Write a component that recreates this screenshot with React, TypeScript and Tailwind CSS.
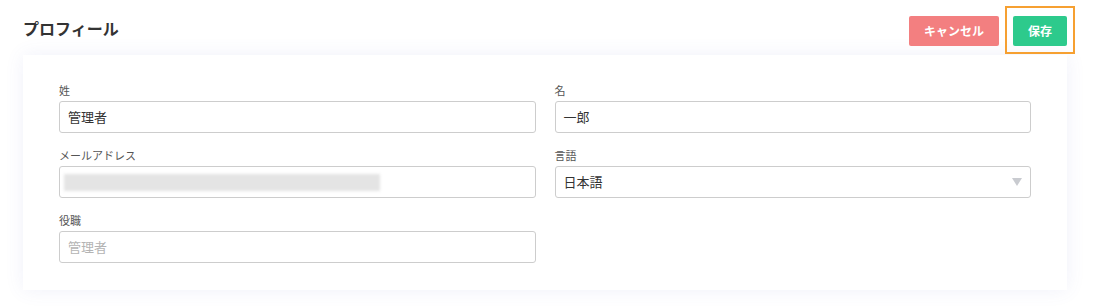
import React from "react";

const font = { fontFamily: '"Noto Sans CJK JP", "Noto Sans", sans-serif' };

function Field({ label, children }: { label: string; children: React.ReactNode }) {
  return (
    <div className="flex flex-col">
      <label className="text-[11px] leading-[16px] text-[#555] mb-[3px]">{label}</label>
      {children}
    </div>
  );
}

function TextBox({ value, placeholder }: { value?: string; placeholder?: string }) {
  return (
    <div className="h-8 border border-[#cdcdcd] rounded-[3px] bg-white flex items-center px-[8px] text-[13px]">
      {value ? (
        <span className="text-[#333]">{value}</span>
      ) : (
        <span className="text-[#b4b4b4]">{placeholder}</span>
      )}
    </div>
  );
}

export default function App() {
  return (
    <div style={font} className="w-[1102px] h-[306px] bg-white pl-[23px] pr-[35px] pt-4">
      <div className="flex items-center justify-between h-[30px]">
        <h2 className="text-[16px] font-bold text-[#333] mb-[7px]">プロフィール</h2>
        <div className="flex gap-[14px]">
          <button className="h-[30px] px-[15px] rounded-[2px] bg-[#f37f80] text-white text-[12px] font-bold">
            キャンセル
          </button>
          <div className="relative">
            <div className="absolute -left-[8px] -right-[8px] -top-[10px] -bottom-[8px] border-2 border-[#f6a031]"></div>
            <button className="relative h-[30px] px-[15px] rounded-[2px] bg-[#2dca8c] text-white text-[12px] font-bold">
              保存
            </button>
          </div>
        </div>
      </div>

      <div className="mt-[9px] bg-white shadow-[0_0_18px_rgba(90,100,200,0.09)] px-9 pt-[27px] pb-[27px]">
        <div className="grid grid-cols-2 gap-x-[19px] gap-y-[14px]">
          <Field label="姓">
            <TextBox value="管理者" />
          </Field>
          <Field label="名">
            <TextBox value="一郎" />
          </Field>
          <Field label="メールアドレス">
            <div className="h-8 border border-[#cdcdcd] rounded-[3px] bg-white flex items-center pl-[4px]">
              <div className="w-[316px] h-[17px] bg-[#e4e4e4] blur-[1.5px]"></div>
            </div>
          </Field>
          <Field label="言語">
            <div className="h-8 border border-[#cdcdcd] rounded-[3px] bg-white flex items-center justify-between pl-[8px] pr-[8px] text-[13px] text-[#333]">
              <span>日本語</span>
              <svg width="10" height="8" viewBox="0 0 10 8">
                <path d="M0 0 H10 L5 8 Z" fill="#c9cbd0" />
              </svg>
            </div>
          </Field>
          <Field label="役職">
            <TextBox placeholder="管理者" />
          </Field>
        </div>
      </div>
    </div>
  );
}
